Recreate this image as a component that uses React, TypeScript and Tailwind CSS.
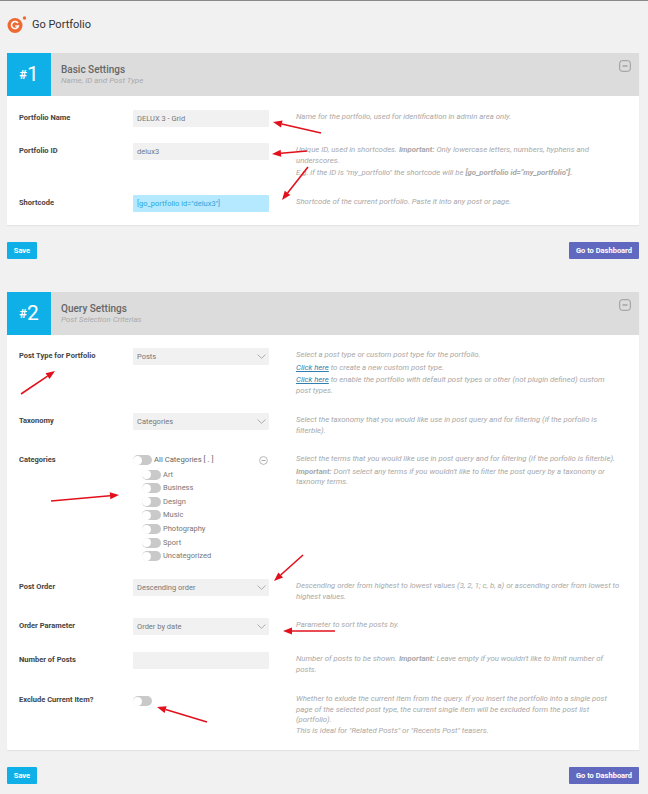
import type { ReactNode } from "react";

// Red annotation arrows that sit on top of the screenshot: [tailX, tailY, headX, headY]
const ARROWS = [
  [321, 132, 273, 121],
  [307, 150, 272, 153],
  [308, 166, 282, 199],
  [21, 393, 55, 370],
  [51, 500, 119, 494],
  [303, 554, 274, 580],
  [335, 630, 283, 630],
  [207, 721, 157, 706],
];

const CATEGORIES = ["Art", "Business", "Design", "Music", "Photography", "Sport", "Uncategorized"];

function Arrows() {
  return (
    <svg className="absolute left-0 top-0 pointer-events-none" width="648" height="794" fill="none">
      {ARROWS.map(([x1, y1, x2, y2]) => {
        const len = Math.hypot(x2 - x1, y2 - y1);
        const ux = (x2 - x1) / len;
        const uy = (y2 - y1) / len;
        const bx = x2 - ux * 9;
        const by = y2 - uy * 9;
        const head = `${x2},${y2} ${bx - uy * 3.5},${by + ux * 3.5} ${bx + uy * 3.5},${by - ux * 3.5}`;
        return (
          <g key={`${x1}-${y1}`}>
            <line x1={x1} y1={y1} x2={bx} y2={by} stroke="#e2101c" strokeWidth="1.6" />
            <polygon points={head} fill="#e2101c" />
          </g>
        );
      })}
    </svg>
  );
}

function Logo() {
  return (
    <svg width="20" height="20" viewBox="0 0 20 20" fill="none" className="shrink-0">
      <circle cx="8" cy="10.5" r="7.5" fill="#ee6a35" />
      <path d="M11 8.2A3.5 3.5 0 1 0 11.4 11H8.2" stroke="#fff" strokeWidth="1.5" />
      <circle cx="17.5" cy="3" r="1.7" fill="#ee6a35" />
    </svg>
  );
}

function Toggle() {
  return (
    <span className="flex h-[10px] w-[19px] shrink-0 items-center rounded-full bg-[#c9c9c9]">
      <span className="h-[9px] w-[9px] rounded-full bg-white" />
    </span>
  );
}

function Field({ children, tone = "gray" }: { children?: ReactNode; tone?: "gray" | "blue" }) {
  const colors = tone === "blue" ? "bg-[#b5e9ff] text-[#2aa5dc]" : "bg-[#f1f1f1] text-[#777]";
  return <div className={`flex h-[17px] w-[136px] shrink-0 items-center rounded-[1px] px-[4px] text-[7.5px] ${colors}`}>{children}</div>;
}

function SelectField({ value }: { value: string }) {
  return (
    <Field>
      <span className="flex-1">{value}</span>
      <svg width="9" height="5" viewBox="0 0 9 5" fill="none" className="mr-[-1px]">
        <path d="M.5.5l4 3.8 4-3.8" stroke="#999" strokeWidth=".8" />
      </svg>
    </Field>
  );
}

function Row({ label, control, height, children }: { label: string; control: ReactNode; height: string; children?: ReactNode }) {
  return (
    <div className={`flex items-start ${height}`}>
      <div className="w-[114px] shrink-0 pt-[3px] text-[7.5px] font-bold leading-[10px] text-[#444]">{label}</div>
      {control}
      <div className="ml-[27px] w-[324px] pt-[2px] text-[7.75px] italic leading-[10.5px] text-[#a8a8a8]">{children}</div>
    </div>
  );
}

function CardHeader({ num, title, subtitle }: { num: string; title: string; subtitle: string }) {
  return (
    <div className="flex h-[43px] bg-[#dcdcdc]">
      <div className="flex w-[44px] items-center justify-center bg-[#0fb0e8] text-white">
        <span className="text-[13px] font-bold">#</span>
        <span className="text-[21px] leading-none">{num}</span>
      </div>
      <div className="ml-[10px] flex-1 pt-[11px]">
        <div className="text-[10px] font-medium leading-[12px] text-[#666]">{title}</div>
        <div className="text-[8px] italic leading-[9px] text-[#aaa]">{subtitle}</div>
      </div>
      <svg width="12" height="12" viewBox="0 0 12 12" fill="none" className="mr-[8px] mt-[7px]">
        <rect x=".7" y=".7" width="10.6" height="10.6" rx="2.5" stroke="#999" strokeWidth="1" />
        <path d="M3.5 6h5" stroke="#888" strokeWidth="1" />
      </svg>
    </div>
  );
}

function Buttons() {
  return (
    <div className="flex justify-between">
      <button className="flex h-[17px] w-[30px] items-center justify-center rounded-[1px] bg-[#0fb0e8] text-[7.5px] font-bold text-white">Save</button>
      <button className="flex h-[17px] w-[70px] items-center justify-center rounded-[1px] bg-[#6168bf] text-[7.5px] font-bold text-white">Go to Dashboard</button>
    </div>
  );
}

export default function App() {
  return (
    <div className="relative min-h-screen overflow-hidden border-t border-[#8a8a8a] bg-[#f1f1f1] pl-[7px] pr-[9px] pt-[14px] font-['Roboto',sans-serif]">
      <div className="flex h-[20px] items-center gap-[5px]">
        <Logo />
        <span className="text-[11px] text-[#333]">Go Portfolio</span>
      </div>

      <section className="mt-[18px] bg-white shadow-[0_1px_1px_rgba(0,0,0,0.05)]">
        <CardHeader num="1" title="Basic Settings" subtitle="Name, ID and Post Type" />
        <div className="px-[12px] pb-[13px] pt-[14px]">
          <Row label="Portfolio Name" height="h-[33px]" control={<Field>DELUX 3 - Grid</Field>}>
            Name for the portfolio, used for identification in admin area only.
          </Row>
          <Row label="Portfolio ID" height="h-[52px]" control={<Field>delux3</Field>}>
            Unique ID, used in shortcodes. <b>Important:</b> Only lowercase letters, numbers, hyphens and underscores.
            <p className="mt-[2px]">
              E.g. if the ID is "my_portfolio" the shortcode will be <b>[go_portfolio id="my_portfolio"].</b>
            </p>
          </Row>
          <Row label="Shortcode" height="h-[17px]" control={<Field tone="blue">[go_portfolio id="delux3"]</Field>}>
            Shortcode of the current portfolio. Paste it into any post or page.
          </Row>
        </div>
      </section>

      <div className="mt-[17px]">
        <Buttons />
      </div>

      <section className="mt-[33px] bg-white shadow-[0_1px_1px_rgba(0,0,0,0.05)]">
        <CardHeader num="2" title="Query Settings" subtitle="Post Selection Criterias" />
        <div className="px-[12px] pt-[13px]">
          <Row label="Post Type for Portfolio" height="h-[65px]" control={<SelectField value="Posts" />}>
            Select a post type or custom post type for the portfolio.
            <p className="mt-[2px]">
              <u className="text-[#2f7fb0]">Click here</u> to create a new custom post type.
            </p>
            <p className="mt-[2px]">
              <u className="text-[#2f7fb0]">Click here</u> to enable the portfolio with default post types or other (not plugin defined) custom post types.
            </p>
          </Row>
          <Row label="Taxonomy" height="h-[39px]" control={<SelectField value="Categories" />}>
            Select the taxonomy that you would like use in post query and for filtering (if the porfolio is filterble).
          </Row>
          <Row
            label="Categories"
            height="h-[127px]"
            control={
              <div className="w-[136px] shrink-0 pt-[3px]">
                <div className="flex items-center gap-[2px] text-[7.7px] leading-[10px] text-[#666]">
                  <Toggle />
                  <span className="flex-1">All Categories [ . ]</span>
                  <svg width="9" height="9" viewBox="0 0 9 9" fill="none" className="mr-[1px]">
                    <circle cx="4.5" cy="4.5" r="3.9" stroke="#999" strokeWidth=".7" />
                    <path d="M2.5 4.5h4" stroke="#888" strokeWidth=".7" />
                  </svg>
                </div>
                <div className="ml-[9px] mt-[4.7px] flex flex-col gap-[3.6px]">
                  {CATEGORIES.map((name) => (
                    <div key={name} className="flex items-center gap-[2px] text-[7.5px] leading-[10px] text-[#777]">
                      <Toggle />
                      {name}
                    </div>
                  ))}
                </div>
              </div>
            }
          >
            Select the terms that you would like use in post query and for filtering (if the porfolio is filterble).
            <p className="mt-[2px]">
              <b>Important:</b> Don't select any terms if you wouldn't like to filter the post query by a taxonomy or taxnomy terms.
            </p>
          </Row>
          <Row label="Post Order" height="h-[39px]" control={<SelectField value="Descending order" />}>
            Descending order from highest to lowest values (3, 2, 1; c, b, a) or ascending order from lowest to highest values.
          </Row>
          <Row label="Order Parameter" height="h-[34px]" control={<SelectField value="Order by date" />}>
            Parameter to sort the posts by.
          </Row>
          <Row label="Number of Posts" height="h-[40px]" control={<Field />}>
            Number of posts to be shown. <b>Important:</b> Leave empty if you wouldn't like to limit number of posts.
          </Row>
          <Row
            label="Exclude Current Item?"
            height="h-[58px]"
            control={
              <div className="w-[136px] shrink-0 pt-[4px]">
                <Toggle />
              </div>
            }
          >
            Whether to exlude the current item from the query. If you insert the portfolio into a single post page of the selected post type, the current single item will be excluded form the post list (portfolio).
            <br />
            This is ideal for "Related Posts" or "Recents Post" teasers.
          </Row>
        </div>
      </section>

      <div className="mt-[17px]">
        <Buttons />
      </div>

      <Arrows />
    </div>
  );
}
